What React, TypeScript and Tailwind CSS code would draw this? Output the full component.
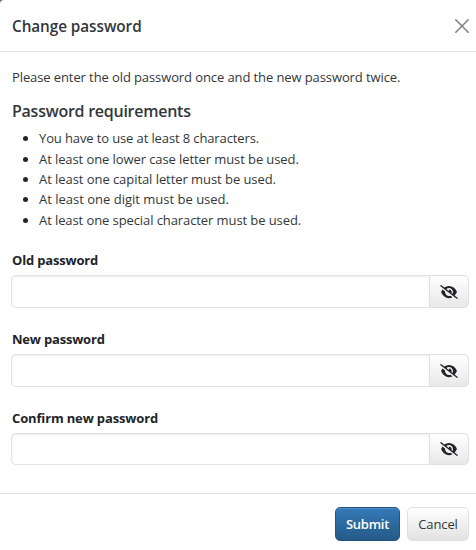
import React, { useState } from 'react';
import { FaEyeSlash, FaEye } from 'react-icons/fa6';

type PasswordFieldProps = {
  label: string;
  name: string;
  labelClass: string;
};

const requirements = [
  { text: 'You have to use at least 8 characters.', className: 'tracking-[-0.12px]' },
  { text: 'At least one lower case letter must be used.', className: 'tracking-[-0.09px]' },
  { text: 'At least one capital letter must be used.', className: 'tracking-[-0.06px]' },
  { text: 'At least one digit must be used.', className: 'tracking-normal' },
  { text: 'At least one special character must be used.', className: 'tracking-[-0.09px]' },
];

const PasswordField: React.FC<PasswordFieldProps> = ({ label, name, labelClass }) => {
  const [visible, setVisible] = useState(false);

  return (
    <div className="h-[78.8px]">
      <label htmlFor={name} className={`block h-[25px] pl-px leading-[20px] font-bold ${labelClass}`}>
        {label}
      </label>
      <div className="flex h-[32.8px]">
        <input
          id={name}
          name={name}
          type={visible ? 'text' : 'password'}
          className="min-w-0 flex-1 rounded-l-[5px] border border-r-0 border-[#dee2e6] bg-white px-3 shadow-[inset_0_1px_2px_rgba(0,0,0,0.075)] outline-none"
        />
        <button
          type="button"
          aria-label="Toggle password visibility"
          onClick={() => setVisible(!visible)}
          className="flex w-10 items-center justify-center rounded-r-[5px] border border-[#dfdfdf] bg-linear-to-b from-white to-[#e8e8e8] pt-px text-[#212529]"
        >
          {visible ? <FaEye className="h-[14px] w-[18px]" /> : <FaEyeSlash className="h-[14px] w-[18px]" />}
        </button>
      </div>
    </div>
  );
};

export default function App() {
  return (
    <div className="h-[550px] w-[476px] bg-[#6b6b6b]">
      <form
        onSubmit={(e) => e.preventDefault()}
        className="flex h-full flex-col rounded-tl-[4px] bg-white font-['Open_Sans','Noto_Sans',sans-serif] text-[13px] text-[#212529]"
      >
        <header className="flex h-[52px] items-center justify-between border-b border-[#dee2e6] pr-[7px] pl-3">
          <h4 className="pt-px text-[15.3px] font-semibold tracking-[-0.06px] text-[#33373b]">Change password</h4>
          <button type="button" aria-label="Close" className="text-[#7f7f7f]">
            <svg className="size-[14px]" viewBox="0 0 14 14" fill="none" stroke="currentColor" strokeWidth="1.5" strokeLinecap="round">
              <path d="M.8.8l12.4 12.4M13.2.8L.8 13.2" />
            </svg>
          </button>
        </header>

        <div className="h-[441px] pt-[15px] pr-[7px] pl-[11px]">
          <p className="pl-px leading-[20.4px] tracking-[-0.1px] text-[#33373b]">
            Please enter the old password once and the new password twice.
          </p>
          <h5 className="mt-[14px] pl-px text-[16px] leading-[20.4px] font-semibold tracking-[-0.26px] text-[#33373b]">
            Password requirements
          </h5>
          <ul className="mt-[6.4px] list-disc pl-7 text-[#33373b] marker:text-[#212529]">
            {requirements.map((item) => (
              <li key={item.text} className={`leading-[20.4px] ${item.className}`}>
                {item.text}
              </li>
            ))}
          </ul>
          <div className="mt-[19.7px]">
            <PasswordField label="Old password" name="oldPassword" labelClass="tracking-[-0.18px]" />
            <PasswordField label="New password" name="newPassword" labelClass="tracking-[-0.2px]" />
            <PasswordField label="Confirm new password" name="confirmPassword" labelClass="tracking-[-0.15px]" />
          </div>
        </div>

        <footer className="flex flex-1 justify-end gap-[7px] border-t border-[#dee2e6] pt-[13px] pr-[7px]">
          <button
            type="submit"
            className="h-[34px] w-[65px] rounded-[5px] border border-[#245580] bg-linear-to-b from-[#337ab7] to-[#265a88] pt-px font-semibold tracking-[-0.25px] text-white shadow-[inset_0_1px_0_rgba(255,255,255,0.15)]"
          >
            Submit
          </button>
          <button
            type="button"
            className="h-[34px] w-[62px] rounded-[5px] border border-[#dfdfdf] bg-linear-to-b from-white to-[#e2e2e2] pt-px tracking-[-0.1px] text-[#33373b]"
          >
            Cancel
          </button>
        </footer>
      </form>
    </div>
  );
}
